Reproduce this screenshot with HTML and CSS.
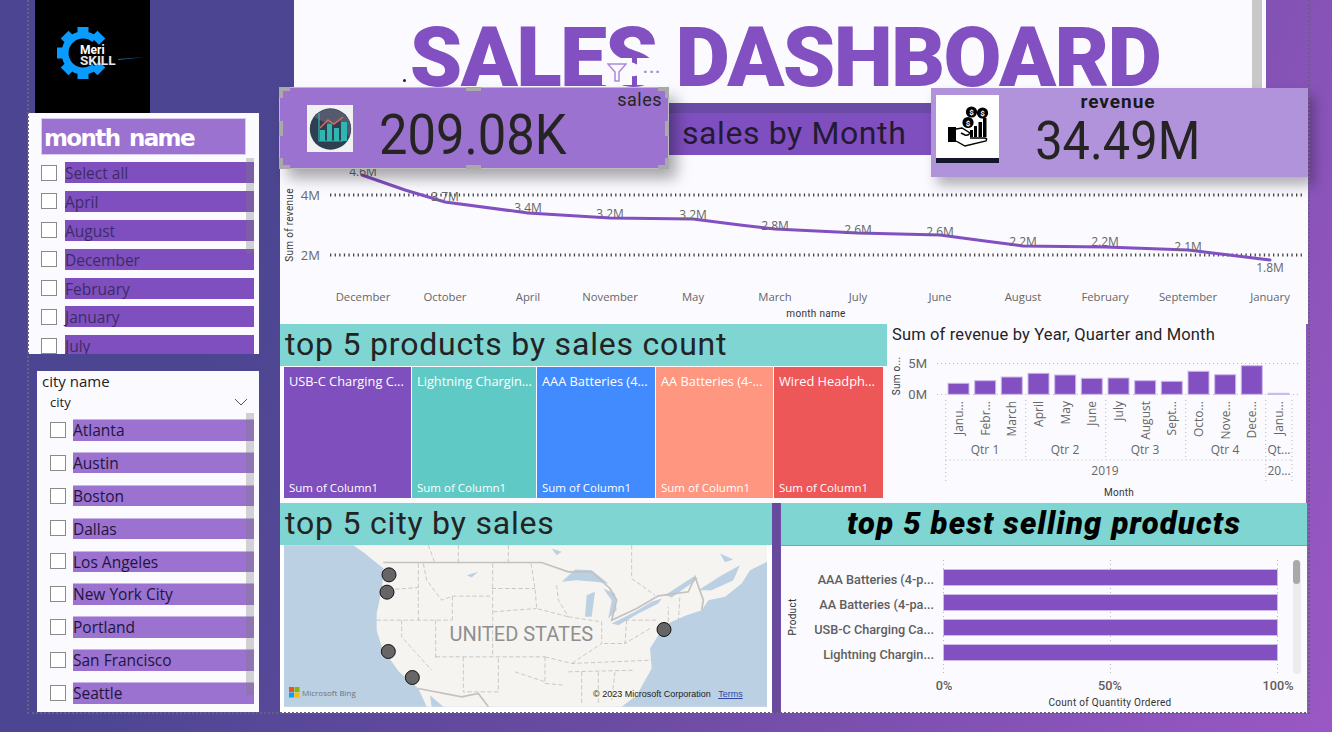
FILE: index.html
```html
<!DOCTYPE html>
<html lang="en">
<head>
<meta charset="utf-8">
<title>Sales Dashboard</title>
<link rel="stylesheet" href="styles.css">
</head>
<body>
<main class="canvas">

  <section class="visual title-panel">
    <h1 class="page-title">SALES DASHBOARD</h1>
    <span class="title-scroll"></span>
    <span class="stray-dot"></span>
  </section>

  <section class="visual line-panel">
    <svg class="fill-svg" viewBox="280 155 1028 167" width="1028" height="167" role="img" aria-label="sales by month line chart">
      <text class="axis-title-dark" transform="translate(293 225) rotate(-90)" text-anchor="middle">Sum of revenue</text>
      <text class="axis-num" x="320" y="200" text-anchor="end">4M</text>
      <text class="axis-num" x="320" y="260" text-anchor="end">2M</text>
      <line class="grid-heavy" x1="330" y1="195" x2="1304" y2="195"/>
      <line class="grid-heavy" x1="330" y1="255" x2="1304" y2="255"/>
      <polyline class="trend" points="362,175 405,190 445,202 528,213 610,218 693,219 740,225 775,229 858,233 940,235 985,241 1023,246 1105,247 1188,250 1270,260"/>
      <g class="data-label" text-anchor="middle">
        <text x="363" y="176">4.6M</text><text x="445" y="201">3.7M</text><text x="528" y="212">3.4M</text>
        <text x="610" y="218">3.2M</text><text x="693" y="219">3.2M</text><text x="775" y="230">2.8M</text>
        <text x="858" y="234">2.6M</text><text x="940" y="236">2.6M</text><text x="1023" y="246">2.2M</text>
        <text x="1105" y="246">2.2M</text><text x="1188" y="251">2.1M</text><text x="1270" y="272">1.8M</text>
      </g>
      <g class="month-label" text-anchor="middle">
        <text x="363" y="301">December</text><text x="445" y="301">October</text><text x="528" y="301">April</text>
        <text x="610" y="301">November</text><text x="693" y="301">May</text><text x="775" y="301">March</text>
        <text x="858" y="301">July</text><text x="940" y="301">June</text><text x="1023" y="301">August</text>
        <text x="1105" y="301">February</text><text x="1188" y="301">September</text><text x="1270" y="301">January</text>
      </g>
      <text class="axis-title-dark" x="816" y="317" text-anchor="middle">month name</text>
    </svg>
  </section>

  <section class="visual month-band"><span class="band-dark"></span><h2 class="band-title">sales by Month</h2></section>

  <div class="visual logo">
    <svg viewBox="35 0 115 113" width="115" height="113" aria-label="MeriSKILL logo">
      <path d="M94.6 39.2 A18 18 0 1 0 94.6 66.8" fill="none" stroke="#0a9bff" stroke-width="7"/>
      <g fill="#0a9bff">
        <rect x="77.5" y="27" width="11" height="9"/>
        <rect x="77.5" y="27" width="11" height="9" transform="rotate(45 83 53)"/>
        <rect x="77.5" y="27" width="11" height="9" transform="rotate(-45 83 53)"/>
        <rect x="77.5" y="27" width="11" height="9" transform="rotate(-90 83 53)"/>
        <rect x="77.5" y="27" width="11" height="9" transform="rotate(-135 83 53)"/>
        <rect x="77.5" y="27" width="11" height="9" transform="rotate(135 83 53)"/>
        <rect x="77.5" y="27" width="11" height="9" transform="rotate(180 83 53)"/>
      </g>
      <path d="M118 60 L146 57 L118 59 Z" fill="#1f6f9c"/>
      <text class="logo-meri" x="80" y="54">Meri</text>
      <text class="logo-skill" x="80" y="65">SKILL</text>
    </svg>
  </div>

  <aside class="visual slicer month-slicer">
    <h2 class="month-slicer-title">month name</h2>
    <ul class="month-list">
      <li class="row month-row"><span class="check"></span><span class="row-bar month-bar">Select all</span></li>
      <li class="row month-row"><span class="check"></span><span class="row-bar month-bar">April</span></li>
      <li class="row month-row"><span class="check"></span><span class="row-bar month-bar">August</span></li>
      <li class="row month-row"><span class="check"></span><span class="row-bar month-bar">December</span></li>
      <li class="row month-row"><span class="check"></span><span class="row-bar month-bar">February</span></li>
      <li class="row month-row"><span class="check"></span><span class="row-bar month-bar">January</span></li>
      <li class="row month-row"><span class="check"></span><span class="row-bar month-bar">July</span></li>
    </ul>
    <span class="scroll-thumb month-thumb"></span>
  </aside>

  <aside class="visual slicer city-slicer">
    <h2 class="city-title">city name</h2>
    <div class="city-drop"><span>city</span>
      <svg width="14" height="8" viewBox="0 0 14 8"><path class="chev" d="M1 1 L7 7 L13 1"/></svg>
    </div>
    <ul class="city-list">
      <li class="row city-row"><span class="check"></span><span class="row-bar city-bar">Atlanta</span></li>
      <li class="row city-row"><span class="check"></span><span class="row-bar city-bar">Austin</span></li>
      <li class="row city-row"><span class="check"></span><span class="row-bar city-bar">Boston</span></li>
      <li class="row city-row"><span class="check"></span><span class="row-bar city-bar">Dallas</span></li>
      <li class="row city-row"><span class="check"></span><span class="row-bar city-bar">Los Angeles</span></li>
      <li class="row city-row"><span class="check"></span><span class="row-bar city-bar">New York City</span></li>
      <li class="row city-row"><span class="check"></span><span class="row-bar city-bar">Portland</span></li>
      <li class="row city-row"><span class="check"></span><span class="row-bar city-bar">San Francisco</span></li>
      <li class="row city-row"><span class="check"></span><span class="row-bar city-bar">Seattle</span></li>
    </ul>
    <span class="scroll-thumb city-thumb"></span>
  </aside>

  <section class="visual products-panel">
    <h2 class="teal-title">top 5 products by sales count</h2>
    <div class="treemap">
      <div class="cell cell-purple"><span>USB-C Charging C...</span><span class="cell-sub">Sum of Column1</span></div>
      <div class="cell cell-teal"><span>Lightning Chargin...</span><span class="cell-sub">Sum of Column1</span></div>
      <div class="cell cell-blue"><span>AAA Batteries (4...</span><span class="cell-sub">Sum of Column1</span></div>
      <div class="cell cell-salmon"><span>AA Batteries (4-...</span><span class="cell-sub">Sum of Column1</span></div>
      <div class="cell cell-red"><span>Wired Headph...</span><span class="cell-sub">Sum of Column1</span></div>
    </div>
  </section>

  <section class="visual column-panel">
    <h2 class="column-title">Sum of revenue by Year, Quarter and Month</h2>
    <svg class="column-svg" viewBox="887 350 419 153" width="419" height="153" role="img" aria-label="revenue by month column chart">
      <text class="axis-title-dark" transform="translate(900 376) rotate(-90)" text-anchor="middle">Sum o...</text>
      <text class="col-num" x="927" y="368" text-anchor="end">5M</text>
      <text class="col-num" x="927" y="399" text-anchor="end">0M</text>
      <line class="grid-light" x1="937" y1="363.5" x2="1298" y2="363.5"/>
      <line class="grid-light" x1="937" y1="394.5" x2="1298" y2="394.5"/>
      <g class="col-bar">
        <rect x="948" y="383.3" width="21" height="11"/><rect x="974.7" y="380.7" width="21" height="13.6"/>
        <rect x="1001.3" y="377" width="21" height="17.3"/><rect x="1028" y="373.3" width="21" height="21"/>
        <rect x="1054.7" y="375" width="21" height="19.3"/><rect x="1081.3" y="378.3" width="21" height="16"/>
        <rect x="1108" y="378" width="21" height="16.3"/><rect x="1134.7" y="380.7" width="21" height="13.6"/>
        <rect x="1161.3" y="381.3" width="21" height="13"/><rect x="1188" y="371.3" width="21" height="23"/>
        <rect x="1214.7" y="374.7" width="21" height="19.6"/><rect x="1241.3" y="365.7" width="21" height="28.6"/>
        <rect x="1268" y="393.3" width="21" height="1"/>
      </g>
      <g class="grid-light">
        <line x1="945.7" y1="400" x2="945.7" y2="481"/><line x1="1025.7" y1="400" x2="1025.7" y2="460"/>
        <line x1="1105.7" y1="400" x2="1105.7" y2="460"/><line x1="1185.7" y1="400" x2="1185.7" y2="460"/>
        <line x1="1265.7" y1="400" x2="1265.7" y2="481"/><line x1="1292" y1="400" x2="1292" y2="481"/>
        <line x1="945.7" y1="460" x2="1292" y2="460"/>
      </g>
      <g class="col-label" text-anchor="end">
        <text transform="translate(963 401) rotate(-90)">Janu...</text><text transform="translate(990 401) rotate(-90)">Febr...</text>
        <text transform="translate(1016 401) rotate(-90)">March</text><text transform="translate(1043 401) rotate(-90)">April</text>
        <text transform="translate(1070 401) rotate(-90)">May</text><text transform="translate(1096 401) rotate(-90)">June</text>
        <text transform="translate(1123 401) rotate(-90)">July</text><text transform="translate(1150 401) rotate(-90)">August</text>
        <text transform="translate(1176 401) rotate(-90)">Sept...</text><text transform="translate(1203 401) rotate(-90)">Octo...</text>
        <text transform="translate(1230 401) rotate(-90)">Nove...</text><text transform="translate(1256 401) rotate(-90)">Dece...</text>
        <text transform="translate(1283 401) rotate(-90)">Janu...</text>
      </g>
      <g class="col-label" text-anchor="middle">
        <text x="985" y="454">Qtr 1</text><text x="1065" y="454">Qtr 2</text><text x="1145" y="454">Qtr 3</text>
        <text x="1225" y="454">Qtr 4</text><text x="1279" y="454">Qt...</text>
        <text x="1105" y="475">2019</text><text x="1279" y="475">20...</text>
      </g>
      <text class="axis-title-dark" x="1119" y="496" text-anchor="middle">Month</text>
    </svg>
  </section>

  <section class="visual city-panel">
    <h2 class="teal-title city-heading">top 5 city by sales</h2>
    <div class="map-frame">
      <svg class="map" viewBox="27 135 1449 485" width="483" height="162" role="img" aria-label="Map of the United States">
        <rect x="27" y="135" width="1449" height="485" fill="#bcd0e4"/>
        <path class="land" d="M235 135 L270 160 L300 185 L326 205 L320 270 L305 340 L305 390 L322 445 L372 515 L430 565 L455 620 L1040 620 L1085 585 L1130 505 L1125 445 L1150 405 L1165 380 L1190 365 L1235 345 L1280 330 L1300 300 L1350 290 L1400 250 L1425 210 L1476 185 L1476 135 Z"/>
        <path class="gulf" d="M465 585 L505 620 L470 620 Z"/>
        <g class="lake">
          <path d="M860 245 L900 208 L950 210 L1000 250 L960 245 L905 240 Z"/>
          <path d="M930 350 L935 285 L960 275 L950 350 Z"/>
          <path d="M985 265 L1020 280 L1025 330 L1000 355 L1010 300 Z"/>
          <path d="M1010 370 L1080 335 L1130 305 L1160 295 L1150 310 L1090 340 L1030 375 Z"/>
          <path d="M1170 285 L1255 230 L1270 235 L1190 292 Z"/>
          <path d="M1270 270 L1340 225 L1395 195 L1375 240 L1310 270 Z"/>
          <path d="M1335 160 L1375 178 L1350 186 Z"/>
          <path d="M830 145 L860 155 L845 165 Z"/>
          <path d="M575 225 L610 215 L590 232 Z"/>
        </g>
        <g class="map-border">
          <path d="M325 187 L800 187 L880 215 L950 215 L1005 265 L1025 300 L1010 360 L1085 325 L1150 287 L1240 275 L1260 230 L1285 300 L1280 330"/>
          <path d="M430 565 L560 590 L610 580 L640 620"/>
        </g>
        <g class="map-state">
          <path d="M430 190 L430 360 M305 360 L530 360 M445 190 L455 240 L500 300 L532 288 L532 360 M532 288 L650 288 M653 190 L653 470 M650 265 L780 265 M768 190 L780 265 L785 325 L880 350 M655 335 L785 325 M320 270 L430 262"/>
          <path d="M380 360 L380 410 L470 510 M482 360 L482 475 M482 470 L810 470 M565 470 L565 575 M670 475 L670 575 L565 575 M810 470 L810 550 L870 555"/>
          <path d="M720 515 L810 545 M810 470 L890 490 L1130 480 M880 350 L980 365 L980 430 L890 490 M845 255 L850 300 L880 350 M1050 360 L1145 360 M1055 360 L1050 430 L980 430 M1125 385 L1050 430 M920 515 L920 610 M970 515 L970 610 M1020 515 L1010 600 M880 515 L1080 510 M1180 365 L1180 320 M1210 365 L1215 285 M1070 135 L1070 235 L1140 285 M460 135 L480 190 M550 135 L550 190 M700 135 L700 190"/>
        </g>
        <text class="map-country" x="739" y="423" text-anchor="middle">UNITED STATES</text>
        <g class="map-pin">
          <circle cx="342" cy="224" r="21"/><circle cx="336" cy="276" r="21"/><circle cx="340" cy="454" r="21"/>
          <circle cx="412" cy="532" r="21"/><circle cx="1167" cy="388" r="21"/>
        </g>
      </svg>
      <span class="bing">
        <svg width="11" height="11" viewBox="0 0 22 22"><rect width="10" height="10" fill="#f25022"/><rect x="11" width="10" height="10" fill="#7fba00"/><rect y="11" width="10" height="10" fill="#00a4ef"/><rect x="11" y="11" width="10" height="10" fill="#ffb900"/></svg>
        Microsoft Bing
      </span>
      <span class="map-credit">© 2023 Microsoft Corporation <a class="map-terms" href="#">Terms</a></span>
    </div>
    <span class="city-strip"></span>
  </section>

  <section class="visual best-panel">
    <h2 class="best-title">top 5 best selling products</h2>
    <div class="best-chart">
      <svg viewBox="781 546 526 167" width="526" height="167" role="img" aria-label="best selling products bar chart">
        <text class="axis-title-dark" transform="translate(796 617) rotate(-90)" text-anchor="middle">Product</text>
        <g class="grid-light">
          <line x1="943.5" y1="560" x2="943.5" y2="676"/><line x1="1110.5" y1="560" x2="1110.5" y2="676"/><line x1="1277.5" y1="560" x2="1277.5" y2="676"/>
        </g>
        <g class="best-label" text-anchor="end">
          <text x="934" y="584">AAA Batteries (4-p...</text>
          <text x="934" y="609">AA Batteries (4-pa...</text>
          <text x="934" y="634">USB-C Charging Ca...</text>
          <text x="934" y="659">Lightning Chargin...</text>
        </g>
        <g class="col-bar">
          <rect x="943.5" y="569.5" width="334" height="16"/><rect x="943.5" y="594.5" width="334" height="16"/>
          <rect x="943.5" y="619.5" width="334" height="16"/><rect x="943.5" y="644.5" width="334" height="16"/>
        </g>
        <g class="best-label" text-anchor="middle">
          <text x="944" y="690">0%</text><text x="1110" y="690">50%</text><text x="1278" y="690">100%</text>
        </g>
        <text class="axis-title-dark" x="1110" y="706" text-anchor="middle">Count of Quantity Ordered</text>
        <rect class="best-track" x="1293" y="560" width="8" height="114" rx="4"/>
        <rect class="best-thumb" x="1293" y="560" width="7" height="24" rx="3.5"/>
      </svg>
    </div>
  </section>

  <article class="visual card sales-card">
    <svg class="sales-icon" viewBox="307 106 46 47" width="46" height="47" aria-hidden="true">
      <rect x="307" y="106" width="46" height="47" fill="#f1f1f1"/>
      <circle cx="330.5" cy="130" r="20.7" fill="#2e3f52"/>
      <path d="M314 118 A20.7 20.7 0 0 1 351 130 L349 138 L340 122 L331 126 L322 122 Z" fill="#565a70"/>
      <path d="M319 114 L319 142 L343 142" fill="none" stroke="#2fb6b0" stroke-width="1.2"/>
      <g fill="#2fb6b0"><rect x="320" y="131" width="5" height="11"/><rect x="327" y="125" width="5" height="17"/><rect x="334" y="129" width="5" height="13"/><rect x="341" y="123" width="6" height="19"/></g>
      <path d="M320 129 L328 121 L334 125 L343 118" fill="none" stroke="#d9694f" stroke-width="1.5"/>
    </svg>
    <strong class="sales-value">209.08K</strong>
    <span class="sales-label">sales</span>
    <span class="h h-t"></span><span class="h h-b"></span><span class="h h-l"></span><span class="h h-r"></span>
    <span class="corner c-tl"></span><span class="corner c-tr"></span><span class="corner c-bl"></span><span class="corner c-br"></span>
  </article>

  <div class="visual card-tools">
    <span class="tool tool-filter">
      <svg width="20" height="19" viewBox="0 0 20 19"><path class="funnel" d="M1 1 L19 1 L12 9 L12 18 L8 18 L8 9 Z"/></svg>
    </span>
    <span class="tool tool-more">···</span>
  </div>

  <article class="visual card revenue-card">
    <svg class="revenue-icon" viewBox="936 95 63 68" width="63" height="68" aria-hidden="true">
      <rect x="936" y="95" width="63" height="68" fill="#fff"/>
      <rect x="936" y="158" width="63" height="5.5" fill="#15152b"/>
      <path d="M948 127 L956 127 L956 142 L948 142 Z" fill="#000"/>
      <path d="M956 129 L962 128 L970 133 Q968 136 965 135 L961 133 M956 141 L965 146 L986 141 Q988 138 984 138 L970 138" fill="none" stroke="#000" stroke-width="1.4"/>
      <g fill="#000">
        <rect x="970" y="130" width="3" height="7"/><rect x="974" y="126" width="3" height="11"/><rect x="978.5" y="122" width="3.5" height="15"/><rect x="983" y="118" width="3.5" height="19"/>
        <circle cx="971.5" cy="112" r="5.6"/><circle cx="982.5" cy="113" r="5.6"/><circle cx="968" cy="122.5" r="5.6"/>
      </g>
      <g class="coin" text-anchor="middle"><text x="971.5" y="115">$</text><text x="982.5" y="116">$</text><text x="968" y="125.5">$</text></g>
    </svg>
    <div class="revenue-body">
      <span class="revenue-label">revenue</span>
      <strong class="revenue-value">34.49M</strong>
    </div>
  </article>

  <div class="canvas-edge"></div>
</main>
</body>
</html>
```

FILE: styles.css
```css
* { box-sizing: border-box; }
html, body { margin: 0; height: 100%; }
body {
  width: 1332px;
  height: 732px;
  overflow: hidden;
  background: linear-gradient(112deg, #4c4692 22%, #6a4ba3 55%, #9a58c5 100%);
  font-family: "Open Sans", "Liberation Sans", sans-serif;
}
h1, h2, ul { margin: 0; padding: 0; list-style: none; font-weight: 400; }
svg { display: block; }

.canvas { position: relative; width: 1332px; height: 732px; }
.visual { position: absolute; }
.canvas-edge {
  position: absolute; left: 27px; top: -4px; width: 1283px; height: 718px;
  border: 2px dotted #66627e; pointer-events: none;
}

/* title */
.title-panel {
  left: 294px; top: 0; width: 972px; height: 103px;
  background: #fbfaff;
  display: flex; justify-content: center;
}
.page-title {
  font-family: Roboto, "Liberation Sans", sans-serif;
  font-size: 84px; font-weight: 900; line-height: 116px;
  color: #8250c1; letter-spacing: -1.7px; padding-left: 10px; white-space: nowrap;
}
.title-scroll { position: absolute; right: 4px; top: 0; width: 10px; height: 103px; background: #c8c8c8; }
.stray-dot { position: absolute; left: 109px; top: 79px; width: 3px; height: 3px; border-radius: 50%; background: #222; }

/* line chart */
.line-panel { left: 280px; top: 155px; width: 1028px; height: 169px; background: #fbfaff; }
.grid-heavy { stroke: #444; stroke-width: 3; stroke-dasharray: 1.3 3.3; }
.trend { fill: none; stroke: #8250c1; stroke-width: 3; stroke-linejoin: round; stroke-linecap: round; }
.data-label { font: 12px "Open Sans", sans-serif; fill: #666; }
.month-label { font: 11.3px "Open Sans", sans-serif; fill: #666; }
.axis-num { font: 13px "Open Sans", sans-serif; fill: #666; }
.axis-title-dark { font: 10px Roboto, sans-serif; fill: #333; letter-spacing: .3px; }

/* band */
.month-band { left: 668px; top: 103px; width: 263px; height: 52px; background: #7f4fbf; }
.band-dark { display: block; height: 10px; background: #6a4ca5; }
.band-title {
  font-family: Roboto, sans-serif; font-size: 32px; line-height: 40px;
  color: #241a33; padding-left: 14px; letter-spacing: .6px; white-space: nowrap;
}

/* logo */
.logo { left: 35px; top: 0; width: 115px; height: 113px; background: #000; }
.logo-meri { font: 700 12px Roboto, sans-serif; fill: #fff; }
.logo-skill { font: 700 13.5px Roboto, sans-serif; fill: #e8e8e8; }

/* slicers */
.slicer { background: #fbfaff; overflow: hidden; }
.month-slicer { left: 28px; top: 113px; width: 231px; height: 241px; padding: 5px 5px 0 13px; }
.month-slicer-title {
  height: 37px; width: 205px; background: #9b72cf; border: 1px solid #d9ccf0;
  color: #fff; font: 700 23px/39px "DejaVu Sans", sans-serif; letter-spacing: -1.6px; word-spacing: 3px; padding-left: 2px; white-space: nowrap;
}
.month-list { display: flex; flex-direction: column; gap: 7.9px; margin-top: 7px; }
.row { display: flex; align-items: center; }
.check { flex: none; width: 16px; height: 16px; border: 1px solid #8a8a8a; background: #fff; }
.row-bar { flex: 1; white-space: nowrap; font-size: 15.5px; }
.month-row { height: 21px; gap: 8px; }
.month-bar { height: 21px; line-height: 22px; background: #7f4fbf; color: #3c2c66; }
.scroll-thumb { position: absolute; width: 8px; background: rgba(120,120,120,.32); }
.month-thumb { left: 218px; top: 45px; height: 95px; }

.city-slicer { left: 37px; top: 371px; width: 222px; height: 341px; padding: 0 5px 0 13px; }
.city-title { font-size: 15px; line-height: 21px; color: #222; margin-left: -8px; }
.city-drop { display: flex; justify-content: space-between; align-items: center; height: 20px; font-size: 13px; color: #222; padding-right: 6px; }
.city-list { display: flex; flex-direction: column; gap: 11.4px; margin-top: 7px; }
.city-row { height: 21.5px; gap: 7px; }
.city-bar { height: 21.5px; line-height: 21px; background: #9b72cf; color: #1e1540; border-top: 1px solid #c9b4e8; }
.city-thumb { left: 209px; top: 42px; height: 282px; }
.chev { fill: none; stroke: #555; stroke-width: 1; }

/* teal heads */
.teal-title {
  height: 42px; background: #7fd5d2; color: #232323;
  font-family: Roboto, sans-serif; font-size: 32px; line-height: 41px; padding-left: 5px; letter-spacing: .8px; white-space: nowrap;
}

/* treemap */
.products-panel { left: 280px; top: 324px; width: 607px; height: 179px; background: #fbfaff; }
.treemap { display: flex; height: 131px; margin: 1px 4px 0 4px; gap: 1px; }
.cell {
  display: flex; flex-direction: column; justify-content: space-between;
  padding: 5px 0 1px 5px; color: #fff; font-size: 12.8px; line-height: 18px; white-space: nowrap; overflow: hidden;
}
.cell-sub { font-size: 11.5px; }
.cell-purple { width: 127px; background: #7f4fbd; }
.cell-teal { width: 124px; background: #5fcac5; }
.cell-blue { width: 118px; background: #428bff; }
.cell-salmon { width: 117px; background: #ff9680; }
.cell-red { width: 109px; background: #ee5757; }

/* columns */
.column-panel { left: 887px; top: 324px; width: 419px; height: 179px; background: #fbfaff; }
.column-title { font: 400 16.5px/22px Roboto, sans-serif; color: #252423; padding-left: 5px; letter-spacing: .15px; height: 26px; white-space: nowrap; }
.grid-light { stroke: #b8b8b8; stroke-width: 1; stroke-dasharray: 1 3; fill: none; }
.col-num { font: 13px Roboto, sans-serif; fill: #666; }
.col-bar rect { fill: #8250c1; stroke: #cdb9ea; stroke-width: 1; }
.col-label { font: 12px "Open Sans", sans-serif; fill: #666; stroke: none; }

/* map */
.city-panel { left: 280px; top: 503px; width: 500px; height: 210px; background: #fff; }
.city-heading { width: 492px; }
.map-frame { position: relative; width: 483px; height: 162px; margin-left: 4px; }
.land { fill: #f6f4f1; }
.gulf, .lake path { fill: #bcd0e4; }
.map-border path { fill: none; stroke: #c4c1be; stroke-width: 5; }
.map-state path { fill: none; stroke: #c2bfbb; stroke-width: 2.5; stroke-dasharray: 13 7; }
.map-country { font: 400 60px Roboto, sans-serif; fill: #8f8f8f; }
.map-pin circle { fill: #666; stroke: #111; stroke-width: 3; }
.bing { position: absolute; left: 5px; top: 142px; display: flex; align-items: center; gap: 2px; font-size: 8px; color: #737373; white-space: nowrap; }
.map-credit { position: absolute; left: 309px; top: 144px; font: 9px "Liberation Sans", sans-serif; color: #222; white-space: nowrap; }
.map-terms { color: #2a48a8; margin-left: 5px; }
.city-strip { position: absolute; left: 492px; top: 0; width: 8px; height: 210px; background: #674a9b; }

/* best */
.best-panel { left: 781px; top: 503px; width: 526px; height: 210px; background: #fbfaff; }
.best-title {
  height: 43px; background: #7fd5d2; color: #000; border-bottom: 1px solid #6fa9a8;
  font: italic 900 31px/41px Roboto, sans-serif; text-align: center; white-space: nowrap; letter-spacing: 1.2px;
}
.best-chart { height: 167px; }
.best-label { font: 500 12.7px Roboto, sans-serif; fill: #605e5c; }
.best-track { fill: #ececec; }
.best-thumb { fill: #a9a9a9; }

/* cards */
.card { display: flex; }
.sales-card {
  left: 280px; top: 88px; width: 388px; height: 80px;
  background: #9b72cf; outline: 1px solid #bdbdbd;
  box-shadow: 8px 10px 14px rgba(0,0,0,.35);
  align-items: center; padding-left: 27px;
}
.sales-icon { flex: none; }
.sales-value {
  font: 400 56px Roboto, sans-serif; color: #252423; margin: 13px 0 0 26px;
  transform: scaleX(.905); transform-origin: left center;
}
.sales-label { position: absolute; right: 6px; top: 1px; font: 400 18px/22px Roboto, sans-serif; color: #252423; letter-spacing: .5px; }
.h { position: absolute; background: #a9a9a9; }
.h-t { left: 186px; top: -1px; width: 15px; height: 4px; }
.h-b { left: 186px; bottom: -1px; width: 15px; height: 4px; }
.h-l { left: -1px; top: 33px; width: 4px; height: 15px; }
.h-r { right: -1px; top: 33px; width: 4px; height: 15px; }
.corner { position: absolute; width: 11px; height: 11px; border: 0 solid #a9a9a9; }
.c-tl { left: -1px; top: -1px; border-width: 4px 0 0 4px; }
.c-tr { right: -1px; top: -1px; border-width: 4px 4px 0 0; }
.c-bl { left: -1px; bottom: -1px; border-width: 0 0 4px 4px; }
.c-br { right: -1px; bottom: -1px; border-width: 0 4px 4px 0; }

.card-tools { left: 602px; top: 58px; display: flex; gap: 5px; height: 27px; }
.tool { display: flex; align-items: center; justify-content: center; width: 30px; height: 27px; background: #fbfaff; }
.tool-filter { padding-top: 2px; }
.funnel { fill: none; stroke: #a98ad8; stroke-width: 1.5; }
.tool-more { color: #a98ad8; font: 700 17px Roboto, sans-serif; letter-spacing: 1px; }

.revenue-card {
  left: 931px; top: 88px; width: 377px; height: 89px;
  background: #b093db; box-shadow: 6px 8px 12px rgba(0,0,0,.3);
  padding: 7px 0 0 5px;
}
.revenue-icon { flex: none; }
.revenue-body { width: 238px; display: flex; flex-direction: column; align-items: center; }
.revenue-label { font: 700 19px/14px Roboto, sans-serif; color: #1a1a1a; letter-spacing: 1px; }
.revenue-value {
  font: 400 53px/58px Roboto, sans-serif; color: #252423; margin-top: 3px;
  transform: scaleX(.92);
}
.coin text { font: 700 8px Roboto, sans-serif; fill: #fff; }
```
